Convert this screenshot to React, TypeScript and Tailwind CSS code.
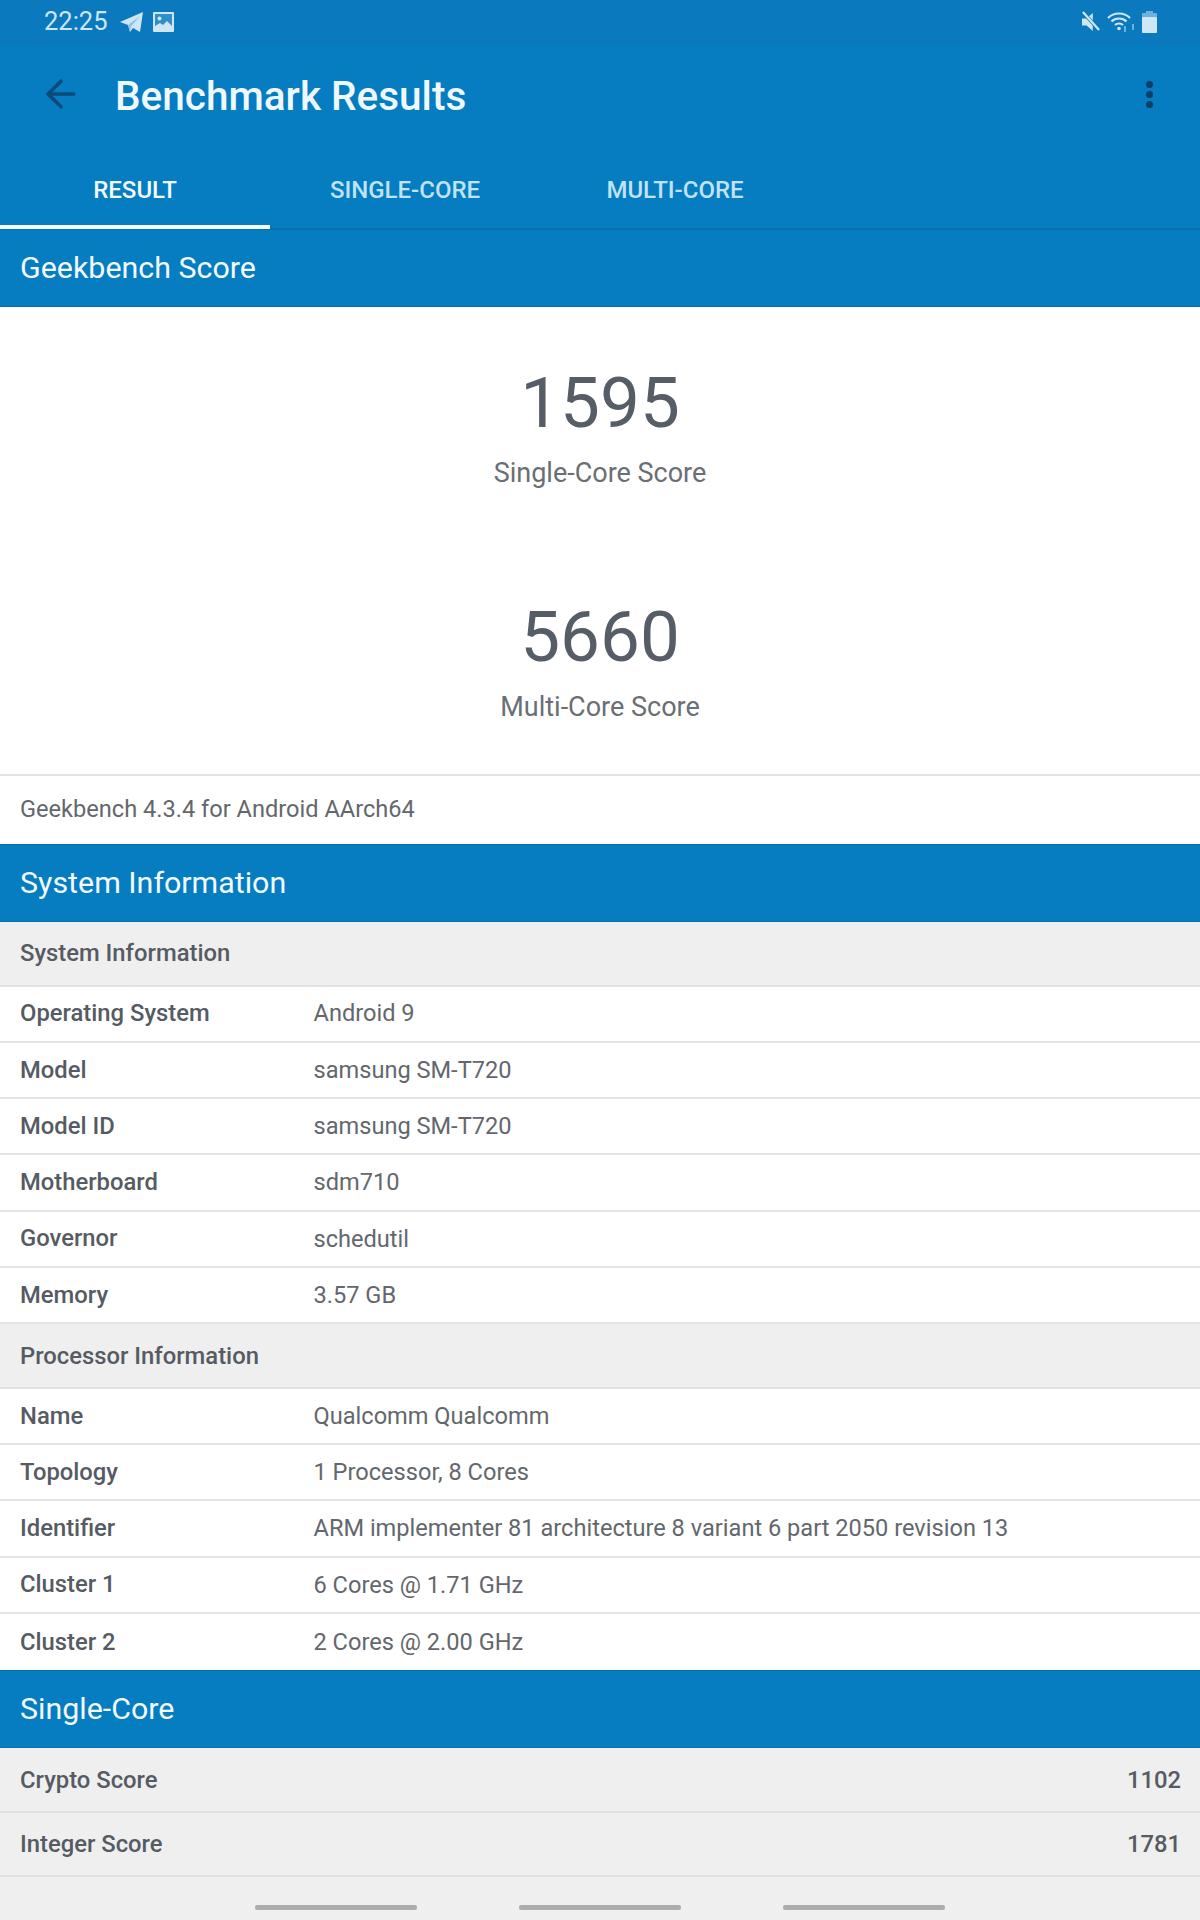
import { ArrowLeft } from 'lucide-react';

const font = "[font-family:Roboto,'Noto_Sans',sans-serif]";

type Row = [string, string];

const systemRows: Row[] = [
  ['Operating System', 'Android 9'],
  ['Model', 'samsung SM-T720'],
  ['Model ID', 'samsung SM-T720'],
  ['Motherboard', 'sdm710'],
  ['Governor', 'schedutil'],
  ['Memory', '3.57 GB'],
];

const processorRows: Row[] = [
  ['Name', 'Qualcomm Qualcomm'],
  ['Topology', '1 Processor, 8 Cores'],
  ['Identifier', 'ARM implementer 81 architecture 8 variant 6 part 2050 revision 13'],
  ['Cluster 1', '6 Cores @ 1.71 GHz'],
  ['Cluster 2', '2 Cores @ 2.00 GHz'],
];

function StatusBar() {
  return (
    <div className="flex h-[44px] items-center bg-[#0b79bd] pl-[44px] pr-[43px] text-[#cfe6f5]">
      <span className="text-[25.500px] leading-none">22:25</span>
      <svg className="ml-[12px]" width="24" height="22" viewBox="0 0 24 22" fill="#cfe6f5">
        <path d="M0 11 23 1l-3 20-7-4-3 4-2-7z" />
        <path d="M8 14 20 5 11 15.500 10 21z" fill="#8cc3e6" />
      </svg>
      <svg className="ml-[9px]" width="21" height="20" viewBox="0 0 21 20">
        <rect width="21" height="20" rx="1" fill="#cfe6f5" />
        <rect x="2" y="2" width="17" height="16" fill="#2f8fc9" />
        <circle cx="6.500" cy="6.500" r="2" fill="#cfe6f5" />
        <path d="M2 18v-4l5-3 3 2 4-4 5 5v4z" fill="#cfe6f5" />
      </svg>
      <div className="ml-auto flex items-center gap-[7px]">
        <svg width="18" height="22" viewBox="0 0 20 22">
          <path d="M0 7h5l7-6v20l-7-6H0z" fill="#cfe6f5" />
          <path d="M2 1l17 19" stroke="#0b79bd" strokeWidth="4" />
          <path d="M1 0l18 20" stroke="#cfe6f5" strokeWidth="2.500" />
        </svg>
        <svg width="28" height="22" viewBox="0 0 28 22" fill="none" stroke="#cfe6f5" strokeWidth="2.200">
          <path d="M1 7c6-6 16-6 22 0" />
          <path d="M4.500 10.500c4-4 11-4 15 0" />
          <path d="M8 14c2-2 6-2 8 0" />
          <circle cx="12" cy="17.500" r="1.800" fill="#cfe6f5" stroke="none" />
          <path d="M18 15v6M26 13v6" strokeWidth="1.500" stroke="#8cc3e6" />
        </svg>
        <svg width="15" height="22" viewBox="0 0 15 22">
          <rect x="4" y="0" width="7" height="3" fill="#6fb1dc" />
          <rect x="0" y="2" width="15" height="5" rx="1" fill="#6fb1dc" />
          <rect x="0" y="6" width="15" height="16" rx="1" fill="#cfe6f5" />
        </svg>
      </div>
    </div>
  );
}

function Toolbar() {
  return (
    <div className="flex h-[104px] items-center bg-[#067cc1] pl-[39px] pr-[47px]">
      <ArrowLeft size={44} strokeWidth={1.900} className="mb-[4px] text-[#0b4a78]" />
      <h1 className="ml-[32px] text-[40.500px] font-medium leading-none text-[#eef8fd]">Benchmark Results</h1>
      <div className="mb-[4px] ml-auto flex flex-col gap-[3px]">
        <span className="size-[7px] rounded-full bg-[#0b3f66]" />
        <span className="size-[7px] rounded-full bg-[#0b3f66]" />
        <span className="size-[7px] rounded-full bg-[#0b3f66]" />
      </div>
    </div>
  );
}

function Tabs() {
  const tabs = ['RESULT', 'SINGLE-CORE', 'MULTI-CORE'];
  return (
    <div className="flex h-[81px] border-b-[1px] border-[#0a70ad] bg-[#067cc1]">
      {tabs.map((tab, i) => (
        <div
          key={tab}
          className={
            i === 0
              ? 'mb-[-1px] flex w-[270px] items-center justify-center border-b-[4px] border-[#f4fafd] pt-[6px] text-[24px] font-medium text-[#f2fafe]'
              : 'flex w-[270px] items-center justify-center pb-0 pt-[3px] text-[24px] font-medium text-[#bfe3f7]'
          }
        >
          {tab}
        </div>
      ))}
    </div>
  );
}

function SectionHeader({ title }: { title: string }) {
  return (
    <div className="flex h-[78px] items-center border-y-[1px] border-[#0a6ea9] bg-[#067cc1] px-[20px] text-[30.400px] leading-none text-[#f2fafe]">
      {title}
    </div>
  );
}

function Score({ value, label }: { value: string; label: string }) {
  return (
    <div className="flex flex-col items-center">
      <div className="h-[84px] text-[71px] leading-[84px] text-[#565d66]">{value}</div>
      <div className="mt-[12px] text-[27px] leading-[32px] text-[#6a6f75]">{label}</div>
    </div>
  );
}

function GroupRow({ title, right }: { title: string; right?: string }) {
  return (
    <div className="flex h-[64.500px] items-center justify-between border-b-[2px] border-[#e2e2e2] bg-[#efefef] pl-[20px] pr-[19px] pt-[2px] text-[23.800px] font-medium text-[#565b63]">
      <span>{title}</span>
      {right && <span>{right}</span>}
    </div>
  );
}

function InfoRow({ row, last }: { row: Row; last?: boolean }) {
  return (
    <div
      className={
        last
          ? 'flex h-[56.300px] items-center bg-white pl-[20px] pt-[1px]'
          : 'flex h-[56.300px] items-center border-b-[2px] border-[#e4e4e4] bg-white pl-[20px] pt-[1px]'
      }
    >
      <span className="w-[293.500px] text-[23.800px] font-medium text-[#565b63]">{row[0]}</span>
      <span className="text-[23.600px] text-[#63676d]">{row[1]}</span>
    </div>
  );
}

export default function App() {
  return (
    <div className={`${font} flex h-[1920px] w-[1200px] flex-col overflow-hidden bg-white`}>
      <StatusBar />
      <Toolbar />
      <Tabs />
      <SectionHeader title="Geekbench Score" />
      <div className="flex h-[467px] flex-col items-center gap-[106px] pt-[54px]">
        <Score value="1595" label="Single-Core Score" />
        <Score value="5660" label="Multi-Core Score" />
      </div>
      <div className="flex h-[70px] items-center border-t-[2px] border-[#e4e4e4] px-[20px] text-[23.600px] text-[#63676d]">
        Geekbench 4.3.4 for Android AArch64
      </div>
      <SectionHeader title="System Information" />
      <GroupRow title="System Information" />
      {systemRows.map((row) => (
        <InfoRow key={row[0]} row={row} />
      ))}
      <GroupRow title="Processor Information" />
      {processorRows.map((row, i) => (
        <InfoRow key={row[0]} row={row} last={i === processorRows.length - 1} />
      ))}
      <SectionHeader title="Single-Core" />
      <GroupRow title="Crypto Score" right="1102" />
      <GroupRow title="Integer Score" right="1781" />
      <div className="flex flex-1 items-center justify-center gap-[102px] bg-[#efefef] pt-[18px]">
        <span className="h-[5px] w-[162px] rounded-[2px] bg-[#adadad]" />
        <span className="h-[5px] w-[162px] rounded-[2px] bg-[#adadad]" />
        <span className="h-[5px] w-[162px] rounded-[2px] bg-[#adadad]" />
      </div>
    </div>
  );
}
